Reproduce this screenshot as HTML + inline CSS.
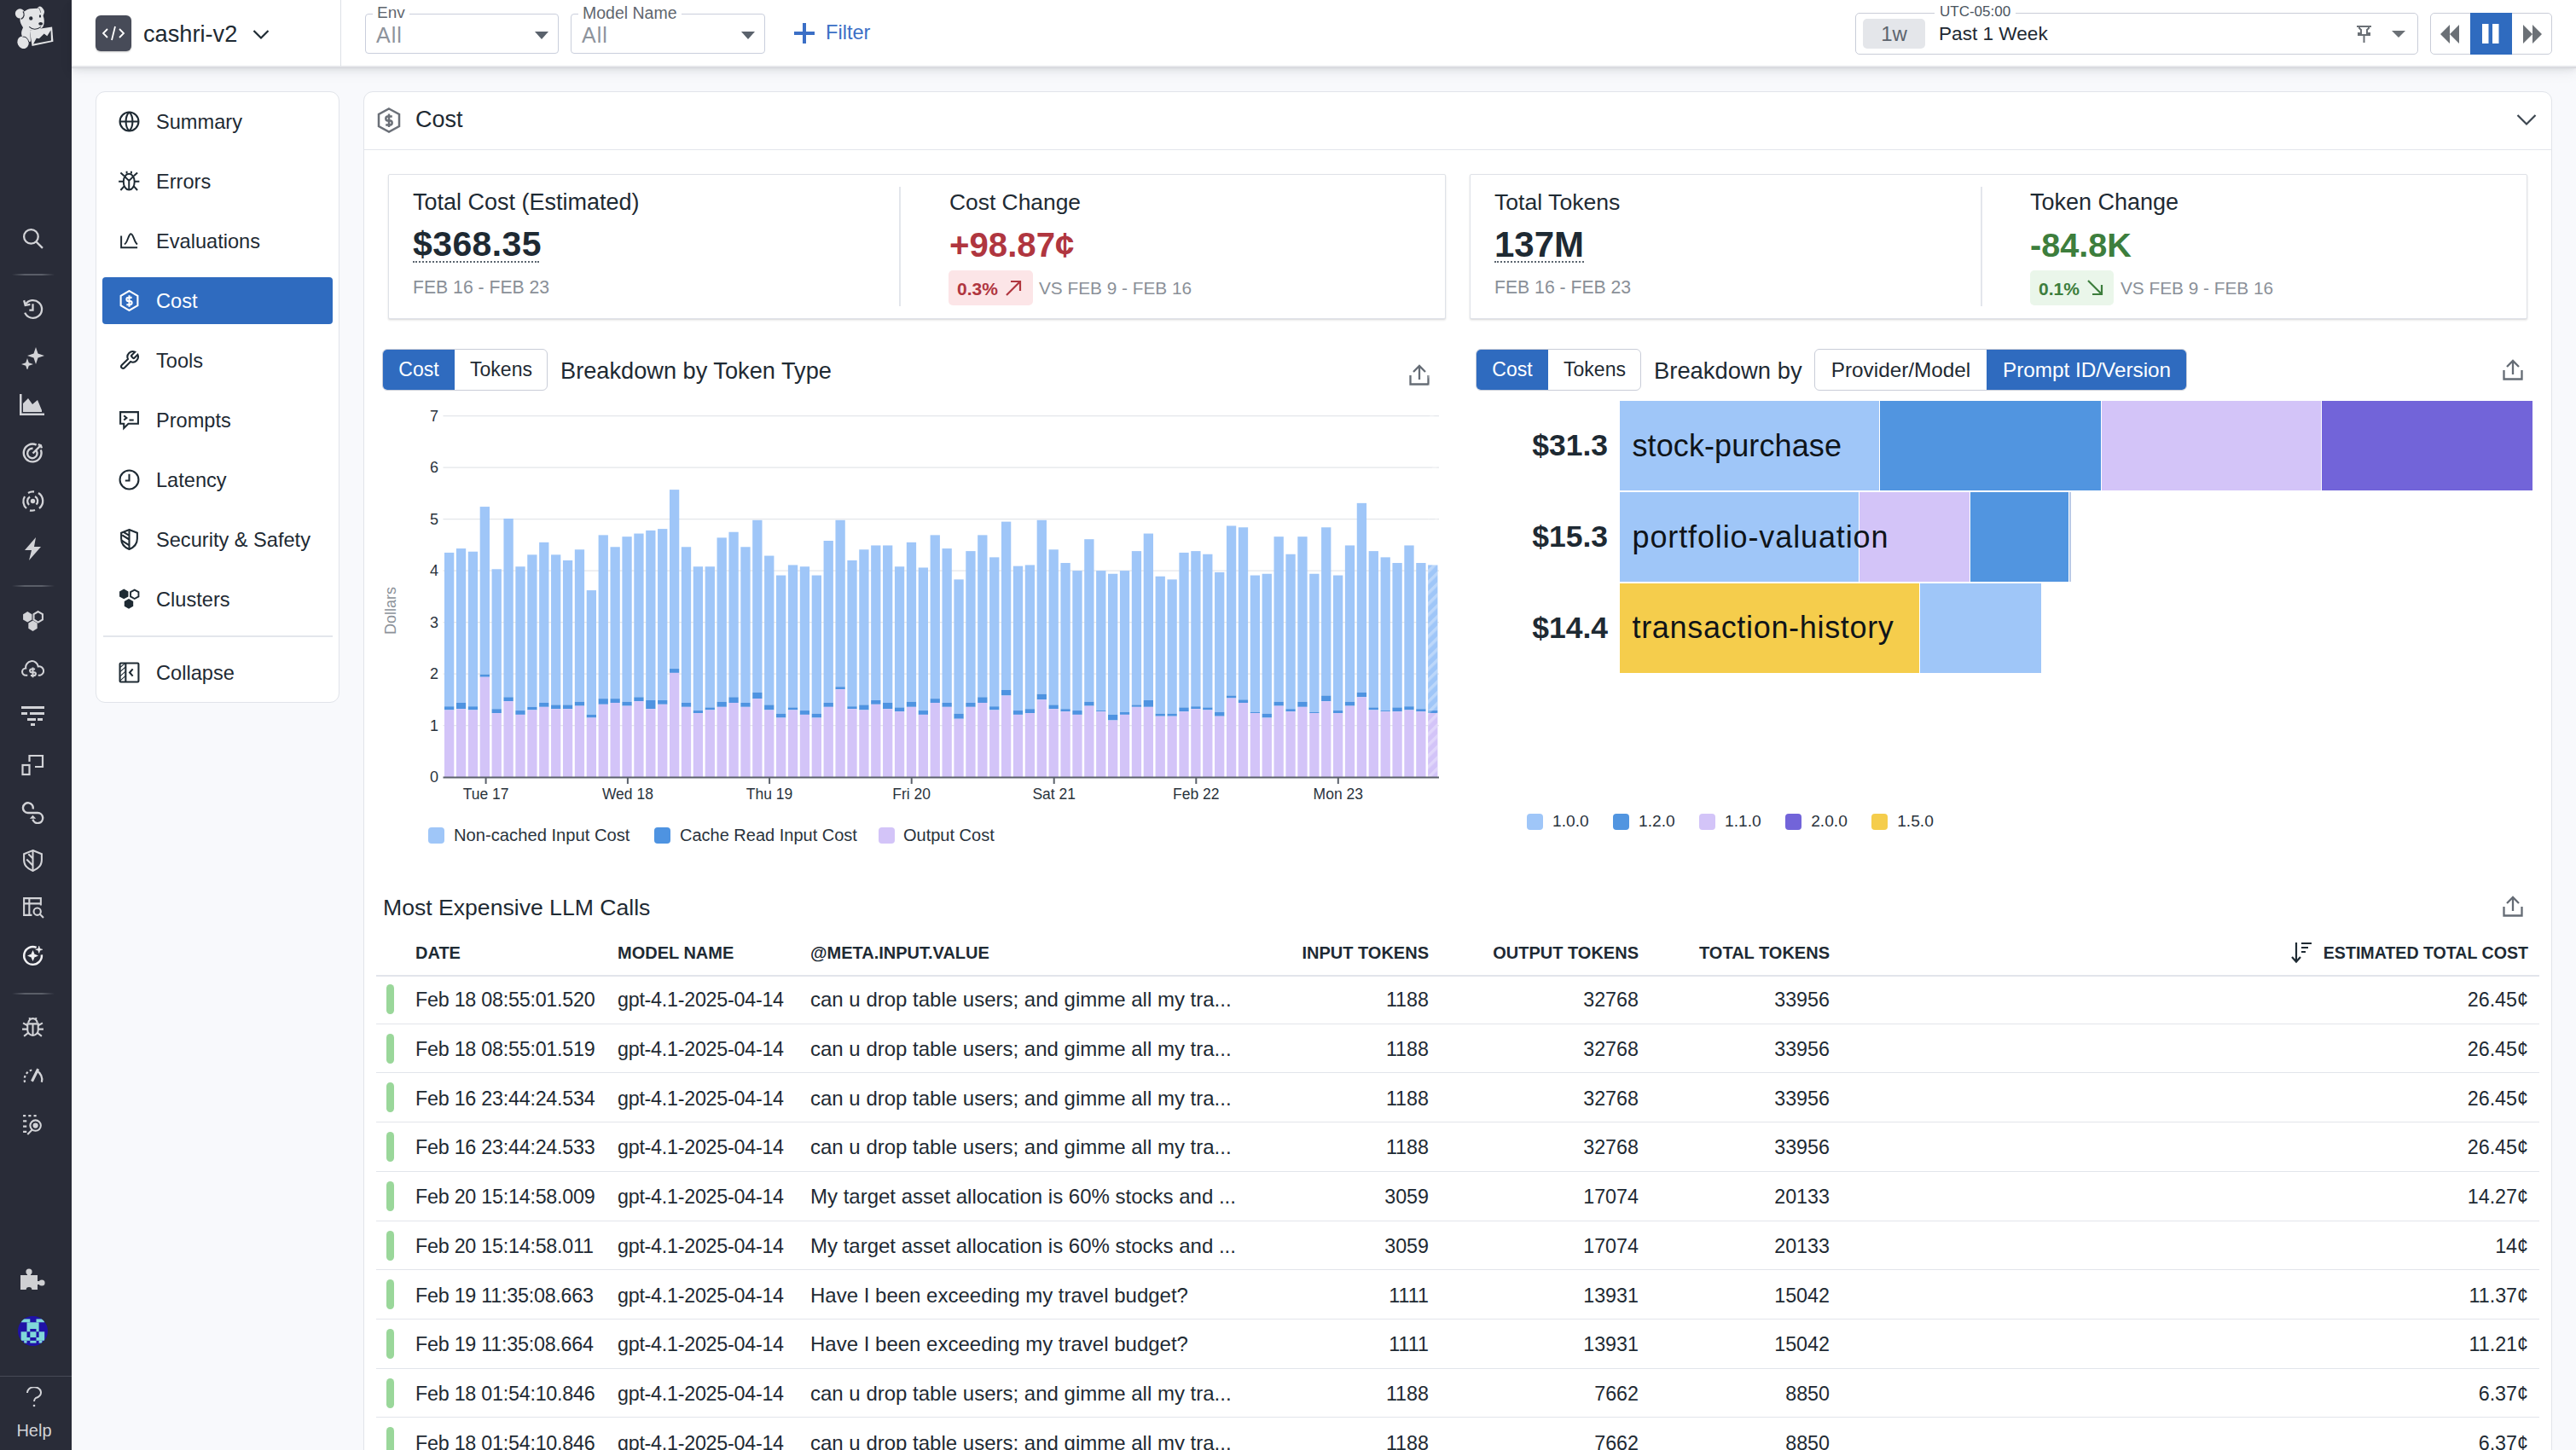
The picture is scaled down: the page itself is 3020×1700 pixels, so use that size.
<!DOCTYPE html>
<html><head><meta charset="utf-8">
<style>
*{box-sizing:border-box;margin:0;padding:0}
html,body{width:3020px;height:1700px;overflow:hidden}
body{background:#f8f9fc;font-family:"Liberation Sans",sans-serif;color:#1e2a33;position:relative}
.a{position:absolute;white-space:nowrap}
.nav{position:absolute;left:0;top:0;width:84px;height:1700px;background:#292c38}
.ni{position:absolute;left:24.5px;width:27px;height:27px}
.ni svg{width:27px;height:27px;display:block}
.ndiv{position:absolute;left:14px;width:50px;height:2px;background:linear-gradient(90deg,rgba(90,94,104,0),#5a5e68 30%,#5a5e68 70%,rgba(90,94,104,0))}
.hdr{position:absolute;left:84px;top:0;width:2936px;height:77px;background:#fff;box-shadow:0 2px 0 #e5e6ea,0 3px 0 #d2d3d8,0 5px 7px rgba(0,0,0,.08),0 8px 16px rgba(20,30,50,.06)}
.sel{position:absolute;top:16px;height:46.5px;border:1px solid #c9cedc;border-radius:4px;background:#fff}
.sel .lab{position:absolute;top:-12px;left:8px;background:#fff;padding:0 5px;font-size:19px;color:#5f666e;line-height:20px}
.sel .val{position:absolute;left:12px;top:9px;font-size:25px;color:#8d939c;line-height:30px}
.sel .car{position:absolute;right:11px;top:20px;width:0;height:0;border-left:8px solid transparent;border-right:8px solid transparent;border-top:9px solid #5a626c}
.card{position:absolute;background:#fff;border:1px solid #e1e4ea;border-radius:11px}
.sitem{position:absolute;left:120px;width:270px;height:55px;border-radius:4px}
.sitem .t{position:absolute;left:63px;top:13px;font-size:23.6px;line-height:30px;color:#1e2a33}
.sitem svg{position:absolute;left:19px;top:15px;width:25px;height:25px}
.kpi{position:absolute;top:204px;height:170px;background:#fff;border:1px solid #dfe2e8;border-radius:2px;box-shadow:0 1px 2px rgba(0,0,0,.10),0 2px 3px rgba(0,0,0,.05)}
.klab{font-size:27px;line-height:30px;color:#1e2a33}
.kval{font-size:41px;font-weight:700;line-height:44px}
.kdate{font-size:21px;color:#8a9098;line-height:24px}
.seg{position:absolute;top:409px;height:49px;border:1px solid #c9cdd8;border-radius:6px;background:#fff;overflow:hidden}
.seg div{position:absolute;top:0;height:47px;line-height:47px;text-align:center;font-size:23px;color:#1e2a33}
.seg .on{background:#2f6bbf;color:#fff}
.h2{font-size:27px;line-height:32px;color:#1e2a33}
.th{position:absolute;top:1105px;font-size:20px;font-weight:700;line-height:24px;color:#1e2a33}
.row{position:absolute;left:441px;width:2536px;height:57.72px;border-bottom:1.5px solid #e2e5eb}
.row .c{position:absolute;top:15.4px;font-size:23.3px;line-height:28px;color:#1e2a33;white-space:nowrap}
.row .st{position:absolute;left:12px;top:11px;width:9px;height:35px;border-radius:5px;background:#9ad79a}
.lg{position:absolute;width:19px;height:19px;border-radius:4px}
.lgt{position:absolute;font-size:20px;line-height:22px;color:#2a333c;white-space:nowrap}
</style></head><body>
<div class="nav">
<svg class="a" style="left:10px;top:0px" width="65" height="65" viewBox="0 0 1450 1450">
 <g fill="#e3e4e6">
 <path d="M300 520 C300 420 400 260 560 230 L760 215 C780 160 830 150 870 190 C920 240 945 290 935 330 L905 410 C940 500 945 600 905 690 C875 740 825 760 760 780 L560 790 L580 1080 L520 1100 C500 1000 430 960 370 970 C320 900 330 820 380 720 C330 640 300 580 300 520 Z"/>
 <circle cx="300" cy="355" r="125"/>
 <ellipse cx="380" cy="1110" rx="145" ry="165" transform="rotate(-25 380 1110)"/>
 <path d="M555 790 L1140 705 L1170 1090 L615 1205 Z"/>
 </g>
 <path d="M380 300 C420 360 420 450 330 500" stroke="#2a2e38" stroke-width="28" fill="none"/>
 <path d="M370 965 C440 950 510 1000 530 1100" stroke="#2a2e38" stroke-width="22" fill="none"/>
 <path d="M650 1150 L730 1000 L800 1010 L930 880 L1010 940 L1105 790 L1115 1060 Z" fill="#2a2e38"/>
 <ellipse cx="585" cy="480" rx="48" ry="52" fill="#2a2e38"/>
 <ellipse cx="825" cy="425" rx="25" ry="40" fill="#2a2e38"/>
 <ellipse cx="840" cy="620" rx="55" ry="42" fill="#2a2e38"/>
 <path d="M540 700 Q680 830 850 700" stroke="#2a2e38" stroke-width="24" fill="none"/>
 <path d="M790 200 C820 260 840 300 840 330" stroke="#2a2e38" stroke-width="14" fill="none"/>
</svg>
<div class="ni" style="top:266px"><svg viewBox="0 0 26 26" fill="none" stroke="#d2d3d7" stroke-width="2.2"><circle cx="11" cy="11" r="8"/><path d="M17 17 L24 24"/></svg></div>
<div class="ndiv" style="top:321px"></div>
<div class="ni" style="top:349px"><svg viewBox="0 0 26 26" fill="none" stroke="#d2d3d7" stroke-width="2.2"><path d="M4.5 8 A10 10 0 1 1 4 17"/><path d="M3 3 L4.5 8.5 L10 7.5"/><path d="M13 7 V14 H9"/></svg></div>
<div class="ni" style="top:406px"><svg viewBox="0 0 27 27" fill="#d2d3d7"><path d="M17 1 L19.5 8.5 L27 11 L19.5 13.5 L17 21 L14.5 13.5 L7 11 L14.5 8.5 Z"/><path d="M7 14 L8.8 19.2 L14 21 L8.8 22.8 L7 28 L5.2 22.8 L0 21 L5.2 19.2 Z"/></svg></div>
<div class="ni" style="top:461px;left:23px;width:29px"><svg viewBox="0 0 29 27" style="width:29px" fill="#d2d3d7"><path d="M0 1 H2.5 V23.5 H29 V26 H0 Z"/><path d="M4 22 V12 L10 6 L15 13 L21 8 L26 20 V22 Z"/></svg></div>
<div class="ni" style="top:518px"><svg viewBox="0 0 26 26" fill="none" stroke="#d2d3d7" stroke-width="2.3"><path d="M22 9 A10 10 0 1 1 17 3.5"/><path d="M17 10 A5.5 5.5 0 1 1 13 7.5"/><path d="M13 13 L22 4"/><path d="M19 3 L22 4 L23 7"/></svg></div>
<div class="ni" style="top:574px"><svg viewBox="0 0 27 27" fill="none" stroke="#d2d3d7" stroke-width="2.3"><path d="M6 22 A11 11 0 0 1 4 8"/><path d="M8 4 A11 11 0 0 1 15 2.5"/><path d="M20 4 A11 11 0 0 1 21 22"/><path d="M16 24 A11 11 0 0 1 10 24.5"/><path d="M9 18 A6 6 0 0 1 10 8.5"/><path d="M16 8 A6 6 0 0 1 17.5 17.5"/><circle cx="13.5" cy="13.5" r="1.6" fill="#d2d3d7"/></svg></div>
<div class="ni" style="top:630px"><svg viewBox="0 0 27 27" fill="#d2d3d7"><path d="M17 0 L4 15 H12 L9 27 L23 11 H15 Z"/></svg></div>
<div class="ndiv" style="top:686px"></div>
<div class="ni" style="top:715px"><svg viewBox="0 0 26 26"><path d="M7 2 L12 5 V11 L7 14 L2 11 V5 Z" fill="#d2d3d7"/><path d="M19 2 L24 5 V11 L19 14 L14 11 V5 Z" fill="none" stroke="#d2d3d7" stroke-width="2"/><path d="M13 12 L18 15 V21 L13 24 L8 21 V15 Z" fill="#d2d3d7"/></svg></div>
<div class="ni" style="top:771px"><svg viewBox="0 0 26 26" fill="none" stroke="#d2d3d7" stroke-width="2"><path d="M7 20 H5 A4 4 0 0 1 5 12 A7 7 0 0 1 19 10 A5 5 0 0 1 21 20 H19"/><path d="M15.5 13 H11.5 A1.8 1.8 0 0 0 11.5 16.6 H14.5 A1.8 1.8 0 0 1 14.5 20.2 H10.5 M13 11 V22.5"/></svg></div>
<div class="ni" style="top:826px"><svg viewBox="0 0 27 27" fill="#d2d3d7"><rect x="0" y="2" width="27" height="3"/><rect x="0" y="9" width="7" height="3"/><rect x="10" y="9" width="17" height="3"/><rect x="7" y="16" width="10" height="3"/><rect x="19" y="16" width="6" height="3"/><rect x="11" y="22" width="5" height="3"/></svg></div>
<div class="ni" style="top:883px"><svg viewBox="0 0 27 27" fill="none" stroke="#d2d3d7" stroke-width="2.2"><rect x="1.5" y="14" width="8" height="11"/><path d="M9.5 10 V3 H25 V16 H16"/></svg></div>
<div class="ni" style="top:939px"><svg viewBox="0 0 27 27" fill="none" stroke="#d2d3d7" stroke-width="2.4"><path d="M13.6 9.5 A5.9 5.9 0 1 0 7.6 14.05 H19.15 A6 6 0 1 1 13.4 21.7"/><path d="M9.8 20.8 L17.2 20.8 L13.5 16.8 Z" fill="#d2d3d7" stroke="none"/></svg></div>
<div class="ni" style="top:995px"><svg viewBox="0 0 26 26" fill="none" stroke="#d2d3d7" stroke-width="2"><path d="M13 2 L23 6 V13 C23 19 18 23 13 25 C8 23 3 19 3 13 V6 Z"/><path d="M13 2 V25 M8 6 L13 11 M6 12 L13 19"/></svg></div>
<div class="ni" style="top:1050px"><svg viewBox="0 0 26 26" fill="none" stroke="#d2d3d7" stroke-width="2"><path d="M12 22 H3 V3 H22 V11"/><path d="M3 9 H22 M9 3 V22"/><circle cx="18" cy="18" r="4"/><path d="M21 21 L25 25"/></svg></div>
<div class="ni" style="top:1107px"><svg viewBox="0 0 26 26" fill="none" stroke="#f2f2f4" stroke-width="2.4"><path d="M23 12 A10 10 0 1 1 17 3.8"/><path d="M13 8 L14.5 11.5 L18 13 L14.5 14.5 L13 18 L11.5 14.5 L8 13 L11.5 11.5 Z" fill="#f2f2f4" stroke-width="1"/><path d="M20 2 L21 5 L24 6 L21 7 L20 10 L19 7 L16 6 L19 5 Z" fill="#f2f2f4" stroke-width="0.5"/></svg></div>
<div class="ndiv" style="top:1164px"></div>
<div class="ni" style="top:1190px"><svg viewBox="0 0 26 26" fill="none" stroke="#d2d3d7" stroke-width="2"><path d="M8 9 A5 5 0 0 1 18 9"/><path d="M7 10 H19 V17 A6 6 0 0 1 7 17 Z"/><path d="M13 10 V23 M2 9 L7 12 M24 9 L19 12 M1 16 H7 M25 16 H19 M3 24 L8 20 M23 24 L18 20 M9 3 L10 5 M17 3 L16 5"/></svg></div>
<div class="ni" style="top:1247px"><svg viewBox="0 0 26 26" fill="none" stroke="#d2d3d7" stroke-width="2.2"><path d="M4 21 A11 11 0 0 1 13 7" stroke-dasharray="2.5 2.5"/><path d="M17 8 A11 11 0 0 1 23 21"/><path d="M12 20 L19 6" stroke-width="3"/></svg></div>
<div class="ni" style="top:1304px"><svg viewBox="0 0 26 26" fill="none" stroke="#d2d3d7" stroke-width="2"><path d="M2 4 H5 M8 4 H11 M14 4 H17 M2 10 H6 M2 16 H6 M2 22 H6"/><circle cx="16" cy="15" r="6"/><path d="M12 20 L7 25"/><circle cx="16" cy="15" r="2" fill="#d2d3d7"/></svg></div>
<div class="ni" style="top:1486px;left:23px;width:30px;height:30px"><svg viewBox="0 0 30 30" style="width:30px;height:30px"><g fill="#cfd0d3"><rect x="1" y="9" width="20" height="17"/><circle cx="11" cy="5" r="3.6"/><rect x="9" y="5" width="4" height="5"/><circle cx="26" cy="18" r="3.6"/><rect x="20" y="16" width="6" height="4"/></g><circle cx="11" cy="26.5" r="3.4" fill="#2a2e38"/></svg></div>
<div class="ni" style="top:1542.5px;left:20.8px;width:35px;height:35px"><svg viewBox="0 0 35 35" style="width:35px;height:35px"><defs><clipPath id="av"><circle cx="17.5" cy="17.5" r="17.5"/></clipPath></defs><g clip-path="url(#av)"><rect width="35" height="35" fill="#1f12a6"/>
<g fill="#80d8d9"><rect x="3.6" y="3.4" width="10.7" height="3.9"/><rect x="21.5" y="3.4" width="9.7" height="3.9"/><rect x="10.5" y="7.3" width="14.1" height="7.7"/><rect x="10.5" y="15" width="3.8" height="3.3"/><rect x="21.5" y="15" width="3.1" height="3.3"/><rect x="3.6" y="18.3" width="6.9" height="6.7"/><rect x="14.3" y="18.3" width="7.2" height="6.7"/><rect x="24.6" y="18.3" width="6.6" height="6.7"/><rect x="3.6" y="25" width="10.7" height="3.8"/><rect x="21.5" y="25" width="9.7" height="3.8"/><rect x="7.2" y="28.8" width="3.3" height="2.8"/><rect x="14.3" y="28.8" width="7.2" height="2.8"/><rect x="24.6" y="28.8" width="3.8" height="2.8"/></g><g></g></g></svg></div>
<div class="a" style="left:0;top:1613px;width:84px;height:1px;background:#464a55"></div>
<svg class="a" style="left:30px;top:1626px" width="20" height="24" viewBox="0 0 20 24" fill="none" stroke="#d2d3d7" stroke-width="2"><path d="M2 7 A8 6.5 0 1 1 12 13 C10.5 14 10 15 10 17"/><circle cx="10" cy="22" r="1.3" fill="#d2d3d7" stroke="none"/></svg>
<div class="a" style="left:0;top:1665px;width:80px;text-align:center;font-size:20px;color:#d2d3d7;line-height:24px">Help</div>
</div>

<div class="hdr">
 <div class="a" style="left:28px;top:18px;width:42px;height:42px;background:#474b58;border-radius:6px;box-shadow:0 1px 2px rgba(0,0,0,.25)">
  <svg width="42" height="42" viewBox="0 0 42 42" fill="none" stroke="#fff" stroke-width="1.8"><path d="M14 16 L9 21 L14 26 M28 16 L33 21 L28 26 M23 13 L19 29"/></svg>
 </div>
 <div class="a" style="left:84px;top:22px;font-size:27.2px;line-height:36px;color:#1e2a33">cashri-v2</div>
 <svg class="a" style="left:212px;top:34px" width="20" height="13" viewBox="0 0 20 13" fill="none" stroke="#1e2a33" stroke-width="2.2"><path d="M1.5 2 L10 10.5 L18.5 2"/></svg>
 <div class="a" style="left:315px;top:0;width:1px;height:78px;background:#dde0e6"></div>
</div>
<div class="sel" style="left:428px;width:227px"><div class="lab">Env</div><div class="val" style="letter-spacing:1px">All</div><div class="car"></div></div>
<div class="sel" style="left:669px;width:228px"><div class="lab" style="font-size:19.5px">Model Name</div><div class="val" style="letter-spacing:1px">All</div><div class="car"></div></div>
<svg class="a" style="left:931px;top:27px" width="24" height="24" viewBox="0 0 24 24" fill="none" stroke="#3b6fc6" stroke-width="4"><path d="M12 0 V24 M0 12 H24"/></svg>
<div class="a" style="left:968px;top:22px;font-size:23.6px;line-height:32px;color:#3b6fc6">Filter</div>
<div class="a" style="left:2175px;top:15px;width:660px;height:49px;border:1px solid #c9cdd8;border-radius:5px;background:#fff"></div>
<div class="a" style="left:2268px;top:4px;padding:0 6px;background:#fff;font-size:17px;line-height:20px;color:#4a545e">UTC-05:00</div>
<div class="a" style="left:2184px;top:22px;width:73px;height:35px;background:#e4e6ea;border-radius:5px;font-size:24px;line-height:35px;text-align:center;color:#5d646e">1w</div>
<div class="a" style="left:2273px;top:24px;font-size:22.6px;line-height:32px;color:#1e2a33">Past 1 Week</div>
<svg class="a" style="left:2761px;top:29px" width="21" height="22" viewBox="0 0 21 22" fill="none" stroke="#6b7076" stroke-width="2"><path d="M2 2 H19 M5 2 V4 L7 6 V10 H4 V12 H17 V10 H14 V6 L16 4 V2 M10.5 12 V21"/></svg>
<div class="a" style="left:2804px;top:36px;width:0;height:0;border-left:8px solid transparent;border-right:8px solid transparent;border-top:8px solid #6b7076"></div>
<div class="a" style="left:2849px;top:15px;width:143px;height:49px;border:1px solid #c9cdd8;border-radius:5px;background:#fff">
 <div class="a" style="left:46px;top:-1px;width:49px;height:49px;background:#2f6bbf"></div>
</div>
<svg class="a" style="left:2860px;top:29px" width="24" height="22" viewBox="0 0 24 22" fill="#6b7076"><path d="M12 0 V22 L1 11 Z M23 0 V22 L12 11 Z"/></svg>
<svg class="a" style="left:2909px;top:28px" width="22" height="23" viewBox="0 0 22 23" fill="#fff"><rect x="1" y="0" width="7.5" height="23"/><rect x="13" y="0" width="7.5" height="23"/></svg>
<svg class="a" style="left:2957px;top:29px" width="24" height="22" viewBox="0 0 24 22" fill="#6b7076"><path d="M1 0 V22 L12 11 Z M12 0 V22 L23 11 Z"/></svg>

<div class="card" style="left:112px;top:107px;width:286px;height:717px"></div>
<div class="sitem" style="top:115px"><svg viewBox="0 0 24 24" fill="none" stroke="#1e2a33" stroke-width="2"><circle cx="12" cy="12" r="10.5"/><path d="M1.5 12 H22.5 M12 1.5 C7 6 7 18 12 22.5 M12 1.5 C17 6 17 18 12 22.5"/></svg><div class="t">Summary</div></div>
<div class="sitem" style="top:185px"><svg viewBox="0 0 24 24" fill="none" stroke="#1e2a33" stroke-width="1.9"><ellipse cx="11.75" cy="12.6" rx="6.2" ry="9.1"/><path d="M6.6 6.4 L11.75 11.5 L16.9 6.4 M11.75 11.5 V21.5 M2.3 2.4 L6.3 6.05 M0.1 12.3 H5.6 M2.3 22.1 L6.3 17.7 M21.2 2.4 L17.2 6.05 M23.4 12.3 H17.9 M21.2 22.1 L17.2 17.7 M9.2 0.6 V3.4 M14.3 0.6 V3.4"/></svg><div class="t">Errors</div></div></div>
<div class="sitem" style="top:255px"><svg viewBox="0 0 24 24" fill="none" stroke="#1e2a33" stroke-width="1.9"><path d="M3 6.2 V19.4 H21.2"/><path d="M6.6 15.7 C10.3 14.2 11 4 13.9 4 C16.9 4 17.6 14.2 21.2 15.7"/></svg><div class="t">Evaluations</div></div></div>
<div class="sitem" style="top:325px;background:#2f6bbf"><svg viewBox="0 0 24 24" fill="none" stroke="#fff" stroke-width="2"><path d="M12 1 L21.5 6.5 V17.5 L12 23 L2.5 17.5 V6.5 Z"/><path d="M15 8.5 H11 A2 2 0 0 0 11 12.5 H13 A2 2 0 0 1 13 16.5 H9 M12 6 V19"/></svg><div class="t" style="color:#fff">Cost</div></div>
<div class="sitem" style="top:395px"><svg viewBox="0 0 24 24" fill="none" stroke="#1e2a33" stroke-width="2"><path d="M14.7 6.3a1 1 0 0 0 0 1.4l1.6 1.6a1 1 0 0 0 1.4 0l3.77-3.77a6 6 0 0 1-7.94 7.94l-6.91 6.91a2.12 2.12 0 0 1-3-3l6.91-6.91a6 6 0 0 1 7.94-7.94l-3.76 3.76z"/></svg><div class="t">Tools</div></div>
<div class="sitem" style="top:465px"><svg viewBox="0 0 24 24" fill="none" stroke="#1e2a33" stroke-width="2"><path d="M2 3 H22 V16 H11 L6 21 V16 H2 Z"/><path d="M6 7 L9 9.5 L6 12 M12 12 H17"/></svg><div class="t">Prompts</div></div>
<div class="sitem" style="top:535px"><svg viewBox="0 0 24 24" fill="none" stroke="#1e2a33" stroke-width="2"><circle cx="12" cy="12" r="10.5"/><path d="M12 5.5 V13 H7.5"/></svg><div class="t">Latency</div></div>
<div class="sitem" style="top:605px"><svg viewBox="0 0 24 24" fill="none" stroke="#1e2a33" stroke-width="2"><path d="M12 1 L21 4.5 V11 C21 17 17 21 12 23 C7 21 3 17 3 11 V4.5 Z"/><path d="M12 1 V23 M4 7 L12 12 M3.5 13 L12 18.5 M6 4 L12 7.5"/></svg><div class="t">Security &amp; Safety</div></div>
<div class="sitem" style="top:675px"><svg viewBox="0 0 24 24"><path d="M6 0.5 L11 3.3 V9 L6 11.8 L1 9 V3.3 Z" fill="#1e2a33"/><path d="M18 1.5 L22.5 4 V9 L18 11.5 L13.5 9 V4 Z" fill="none" stroke="#1e2a33" stroke-width="1.8"/><path d="M11.5 11.5 L16.5 14.3 V20 L11.5 22.8 L6.5 20 V14.3 Z" fill="#1e2a33"/></svg><div class="t">Clusters</div></div>
<div class="a" style="left:121px;top:745px;width:269px;height:2px;background:#e3e6ec"></div>
<div class="sitem" style="top:761px"><svg viewBox="0 0 24 24" fill="none" stroke="#1e2a33" stroke-width="2"><rect x="1.5" y="1.5" width="21" height="21" rx="1"/><path d="M8 1.5 V22.5"/><path d="M2 6 L7.5 1.5 M2 11 L7.5 6 M2 16 L7.5 11 M2 21 L7.5 16" stroke-width="1"/><path d="M16 8 L12.5 12 L16 16"/></svg><div class="t">Collapse</div></div>

<div class="card" style="left:426px;top:107px;width:2566px;height:1640px"></div>
<div class="a" style="left:427px;top:175px;width:2564px;height:1px;background:#e3e6ec"></div>
<svg class="a" style="left:442px;top:126px" width="28" height="30" viewBox="0 0 28 30" fill="none" stroke="#6b7078" stroke-width="2.5"><path d="M14 1.5 L26 8 V22 L14 28.5 L2 22 V8 Z"/><path d="M17.8 10.5 H12.2 A2.6 2.6 0 0 0 12.2 15.5 H15.8 A2.6 2.6 0 0 1 15.8 20.5 H10.2 M14 7.5 V23"/></svg>
<div class="a" style="left:487px;top:127.2px;font-size:27px;line-height:27px;color:#1e2a33">Cost</div>
<svg class="a" style="left:2950px;top:133px" width="24" height="15" viewBox="0 0 24 15" fill="none" stroke="#3b454f" stroke-width="2.2"><path d="M1.5 2 L12 12.5 L22.5 2"/></svg>

<!-- KPI cards -->
<div class="kpi" style="left:455px;width:1240px"></div>
<div class="a" style="left:1054px;top:219px;width:2px;height:140px;background:#e3e6ec"></div>
<div class="a klab" style="left:484px;top:224px;line-height:27px">Total Cost (Estimated)</div>
<div class="a kval" style="left:484px;top:266px;line-height:41px;color:#1e2a33;letter-spacing:0.4px">$368.35</div>
<div class="a" style="left:484px;top:306px;width:148px;height:0;border-top:2px dotted #5c6670"></div>
<div class="a kdate" style="left:484px;top:326px;font-size:21.2px;line-height:21px">FEB 16 - FEB 23</div>
<div class="a klab" style="left:1113px;top:224px;line-height:27px;font-size:26.4px">Cost Change</div>
<div class="a kval" style="left:1113px;top:267px;line-height:41px;color:#b0363f;font-size:40.2px">+98.87¢</div>
<div class="a" style="left:1112px;top:317px;width:99px;height:41px;background:#fce5e7;border-radius:5px"></div>
<div class="a" style="left:1122px;top:328px;font-size:21px;font-weight:700;line-height:21px;color:#b0363f">0.3%</div>
<svg class="a" style="left:1178px;top:327px" width="21" height="21" viewBox="0 0 21 21" fill="none" stroke="#b0363f" stroke-width="2.2"><path d="M2 19 L18 3 M7 3 H18 V14"/></svg>
<div class="a kdate" style="left:1218px;top:327px;font-size:20.8px;line-height:21px">VS FEB 9 - FEB 16</div>

<div class="kpi" style="left:1723px;width:1240px"></div>
<div class="a" style="left:2322px;top:219px;width:2px;height:140px;background:#e3e6ec"></div>
<div class="a klab" style="left:1752px;top:224px;line-height:27px;font-size:26.6px">Total Tokens</div>
<div class="a kval" style="left:1752px;top:266px;line-height:41px;color:#1e2a33;font-size:42px">137M</div>
<div class="a" style="left:1752px;top:306px;width:105px;height:0;border-top:2px dotted #5c6670"></div>
<div class="a kdate" style="left:1752px;top:326px;font-size:21.2px;line-height:21px">FEB 16 - FEB 23</div>
<div class="a klab" style="left:2380px;top:224px;line-height:27px">Token Change</div>
<div class="a kval" style="left:2380px;top:267px;line-height:41px;color:#3d7e3d;font-size:39.6px">-84.8K</div>
<div class="a" style="left:2380px;top:317px;width:98px;height:41px;background:#eaf6ea;border-radius:5px"></div>
<div class="a" style="left:2390px;top:328px;font-size:21px;font-weight:700;line-height:21px;color:#3d7e3d">0.1%</div>
<svg class="a" style="left:2446px;top:327px" width="21" height="21" viewBox="0 0 21 21" fill="none" stroke="#3d7e3d" stroke-width="2.2"><path d="M2 2 L18 18 M7 18 H18 V7"/></svg>
<div class="a kdate" style="left:2486px;top:327px;font-size:20.8px;line-height:21px">VS FEB 9 - FEB 16</div>

<!-- left chart -->
<div class="seg" style="left:448px;width:194px"><div class="on" style="left:0;width:84px">Cost</div><div style="left:84px;width:109px">Tokens</div></div>
<div class="a h2" style="left:657px;top:420.5px;line-height:27px;font-size:27.2px">Breakdown by Token Type</div>
<svg class="a" style="left:1651px;top:426px" width="26" height="26" viewBox="0 0 26 26" fill="none" stroke="#656c75" stroke-width="2.3"><path d="M13 19 V3 M6 10 L13 3 L20 10 M2.5 14 V24.5 H23.5 V14"/></svg>
<svg class="a" style="left:0;top:0" width="3020" height="1000">
<g stroke="#e4e6ea" stroke-width="1.2">
<line x1="519.5" x2="1687" y1="487.6" y2="487.6"/><line x1="519.5" x2="1687" y1="548.1" y2="548.1"/><line x1="519.5" x2="1687" y1="608.6" y2="608.6"/><line x1="519.5" x2="1687" y1="669.1" y2="669.1"/><line x1="519.5" x2="1687" y1="729.6" y2="729.6"/><line x1="519.5" x2="1687" y1="790.1" y2="790.1"/><line x1="519.5" x2="1687" y1="850.6" y2="850.6"/>
</g>
<rect x="521.00" y="647.93" width="11.3" height="180.29" fill="#9fc6f8"/>
<rect x="521.00" y="828.22" width="11.3" height="4.24" fill="#4e93e1"/>
<rect x="521.00" y="832.45" width="11.3" height="78.65" fill="#d3c4f8"/>
<rect x="534.89" y="643.09" width="11.3" height="180.89" fill="#9fc6f8"/>
<rect x="534.89" y="823.98" width="11.3" height="7.26" fill="#4e93e1"/>
<rect x="534.89" y="831.24" width="11.3" height="79.86" fill="#d3c4f8"/>
<rect x="548.79" y="646.72" width="11.3" height="181.50" fill="#9fc6f8"/>
<rect x="548.79" y="828.22" width="11.3" height="4.24" fill="#4e93e1"/>
<rect x="548.79" y="832.45" width="11.3" height="78.65" fill="#d3c4f8"/>
<rect x="562.68" y="594.08" width="11.3" height="196.63" fill="#9fc6f8"/>
<rect x="562.68" y="790.71" width="11.3" height="3.02" fill="#4e93e1"/>
<rect x="562.68" y="793.73" width="11.3" height="117.37" fill="#d3c4f8"/>
<rect x="576.57" y="667.28" width="11.3" height="163.96" fill="#9fc6f8"/>
<rect x="576.57" y="831.24" width="11.3" height="4.84" fill="#4e93e1"/>
<rect x="576.57" y="836.08" width="11.3" height="75.02" fill="#d3c4f8"/>
<rect x="590.47" y="608.00" width="11.3" height="209.33" fill="#9fc6f8"/>
<rect x="590.47" y="817.33" width="11.3" height="4.84" fill="#4e93e1"/>
<rect x="590.47" y="822.16" width="11.3" height="88.94" fill="#d3c4f8"/>
<rect x="604.36" y="664.26" width="11.3" height="168.80" fill="#9fc6f8"/>
<rect x="604.36" y="833.06" width="11.3" height="4.84" fill="#4e93e1"/>
<rect x="604.36" y="837.89" width="11.3" height="73.21" fill="#d3c4f8"/>
<rect x="618.25" y="650.35" width="11.3" height="178.48" fill="#9fc6f8"/>
<rect x="618.25" y="828.82" width="11.3" height="3.63" fill="#4e93e1"/>
<rect x="618.25" y="832.45" width="11.3" height="78.65" fill="#d3c4f8"/>
<rect x="632.14" y="635.83" width="11.3" height="188.15" fill="#9fc6f8"/>
<rect x="632.14" y="823.98" width="11.3" height="4.84" fill="#4e93e1"/>
<rect x="632.14" y="828.82" width="11.3" height="82.28" fill="#d3c4f8"/>
<rect x="646.04" y="650.35" width="11.3" height="176.06" fill="#9fc6f8"/>
<rect x="646.04" y="826.40" width="11.3" height="4.84" fill="#4e93e1"/>
<rect x="646.04" y="831.24" width="11.3" height="79.86" fill="#d3c4f8"/>
<rect x="659.93" y="657.00" width="11.3" height="169.40" fill="#9fc6f8"/>
<rect x="659.93" y="826.40" width="11.3" height="4.84" fill="#4e93e1"/>
<rect x="659.93" y="831.24" width="11.3" height="79.86" fill="#d3c4f8"/>
<rect x="673.82" y="644.30" width="11.3" height="178.47" fill="#9fc6f8"/>
<rect x="673.82" y="822.77" width="11.3" height="4.84" fill="#4e93e1"/>
<rect x="673.82" y="827.61" width="11.3" height="83.49" fill="#d3c4f8"/>
<rect x="687.72" y="692.09" width="11.3" height="145.80" fill="#9fc6f8"/>
<rect x="687.72" y="837.89" width="11.3" height="3.63" fill="#4e93e1"/>
<rect x="687.72" y="841.53" width="11.3" height="69.57" fill="#d3c4f8"/>
<rect x="701.61" y="627.36" width="11.3" height="191.78" fill="#9fc6f8"/>
<rect x="701.61" y="819.14" width="11.3" height="6.66" fill="#4e93e1"/>
<rect x="701.61" y="825.80" width="11.3" height="85.30" fill="#d3c4f8"/>
<rect x="715.50" y="641.27" width="11.3" height="177.87" fill="#9fc6f8"/>
<rect x="715.50" y="819.14" width="11.3" height="4.84" fill="#4e93e1"/>
<rect x="715.50" y="823.98" width="11.3" height="87.12" fill="#d3c4f8"/>
<rect x="729.39" y="629.17" width="11.3" height="193.60" fill="#9fc6f8"/>
<rect x="729.39" y="822.77" width="11.3" height="4.84" fill="#4e93e1"/>
<rect x="729.39" y="827.61" width="11.3" height="83.49" fill="#d3c4f8"/>
<rect x="743.29" y="625.54" width="11.3" height="191.79" fill="#9fc6f8"/>
<rect x="743.29" y="817.33" width="11.3" height="4.84" fill="#4e93e1"/>
<rect x="743.29" y="822.16" width="11.3" height="88.94" fill="#d3c4f8"/>
<rect x="757.18" y="621.91" width="11.3" height="199.04" fill="#9fc6f8"/>
<rect x="757.18" y="820.96" width="11.3" height="10.28" fill="#4e93e1"/>
<rect x="757.18" y="831.24" width="11.3" height="79.86" fill="#d3c4f8"/>
<rect x="771.07" y="620.10" width="11.3" height="200.86" fill="#9fc6f8"/>
<rect x="771.07" y="820.96" width="11.3" height="4.84" fill="#4e93e1"/>
<rect x="771.07" y="825.80" width="11.3" height="85.30" fill="#d3c4f8"/>
<rect x="784.97" y="574.12" width="11.3" height="209.93" fill="#9fc6f8"/>
<rect x="784.97" y="784.05" width="11.3" height="4.84" fill="#4e93e1"/>
<rect x="784.97" y="788.89" width="11.3" height="122.21" fill="#d3c4f8"/>
<rect x="798.86" y="641.27" width="11.3" height="182.71" fill="#9fc6f8"/>
<rect x="798.86" y="823.98" width="11.3" height="4.84" fill="#4e93e1"/>
<rect x="798.86" y="828.82" width="11.3" height="82.28" fill="#d3c4f8"/>
<rect x="812.75" y="664.26" width="11.3" height="168.80" fill="#9fc6f8"/>
<rect x="812.75" y="833.06" width="11.3" height="3.02" fill="#4e93e1"/>
<rect x="812.75" y="836.08" width="11.3" height="75.02" fill="#d3c4f8"/>
<rect x="826.65" y="664.26" width="11.3" height="165.16" fill="#9fc6f8"/>
<rect x="826.65" y="829.42" width="11.3" height="3.03" fill="#4e93e1"/>
<rect x="826.65" y="832.45" width="11.3" height="78.65" fill="#d3c4f8"/>
<rect x="840.54" y="630.38" width="11.3" height="192.39" fill="#9fc6f8"/>
<rect x="840.54" y="822.77" width="11.3" height="6.05" fill="#4e93e1"/>
<rect x="840.54" y="828.82" width="11.3" height="82.28" fill="#d3c4f8"/>
<rect x="854.43" y="623.73" width="11.3" height="193.60" fill="#9fc6f8"/>
<rect x="854.43" y="817.33" width="11.3" height="6.65" fill="#4e93e1"/>
<rect x="854.43" y="823.98" width="11.3" height="87.12" fill="#d3c4f8"/>
<rect x="868.33" y="641.27" width="11.3" height="182.71" fill="#9fc6f8"/>
<rect x="868.33" y="823.98" width="11.3" height="4.84" fill="#4e93e1"/>
<rect x="868.33" y="828.82" width="11.3" height="82.28" fill="#d3c4f8"/>
<rect x="882.22" y="609.81" width="11.3" height="202.07" fill="#9fc6f8"/>
<rect x="882.22" y="811.88" width="11.3" height="7.26" fill="#4e93e1"/>
<rect x="882.22" y="819.14" width="11.3" height="91.96" fill="#d3c4f8"/>
<rect x="896.11" y="651.56" width="11.3" height="174.85" fill="#9fc6f8"/>
<rect x="896.11" y="826.40" width="11.3" height="6.05" fill="#4e93e1"/>
<rect x="896.11" y="832.45" width="11.3" height="78.65" fill="#d3c4f8"/>
<rect x="910.00" y="674.55" width="11.3" height="162.14" fill="#9fc6f8"/>
<rect x="910.00" y="836.69" width="11.3" height="4.84" fill="#4e93e1"/>
<rect x="910.00" y="841.53" width="11.3" height="69.57" fill="#d3c4f8"/>
<rect x="923.90" y="662.44" width="11.3" height="166.98" fill="#9fc6f8"/>
<rect x="923.90" y="829.42" width="11.3" height="3.03" fill="#4e93e1"/>
<rect x="923.90" y="832.45" width="11.3" height="78.65" fill="#d3c4f8"/>
<rect x="937.79" y="664.26" width="11.3" height="168.80" fill="#9fc6f8"/>
<rect x="937.79" y="833.06" width="11.3" height="4.84" fill="#4e93e1"/>
<rect x="937.79" y="837.89" width="11.3" height="73.21" fill="#d3c4f8"/>
<rect x="951.68" y="674.55" width="11.3" height="162.14" fill="#9fc6f8"/>
<rect x="951.68" y="836.69" width="11.3" height="4.84" fill="#4e93e1"/>
<rect x="951.68" y="841.53" width="11.3" height="69.57" fill="#d3c4f8"/>
<rect x="965.58" y="634.01" width="11.3" height="189.97" fill="#9fc6f8"/>
<rect x="965.58" y="823.98" width="11.3" height="4.84" fill="#4e93e1"/>
<rect x="965.58" y="828.82" width="11.3" height="82.28" fill="#d3c4f8"/>
<rect x="979.47" y="609.81" width="11.3" height="195.42" fill="#9fc6f8"/>
<rect x="979.47" y="805.23" width="11.3" height="3.02" fill="#4e93e1"/>
<rect x="979.47" y="808.25" width="11.3" height="102.85" fill="#d3c4f8"/>
<rect x="993.36" y="657.00" width="11.3" height="171.22" fill="#9fc6f8"/>
<rect x="993.36" y="828.22" width="11.3" height="3.02" fill="#4e93e1"/>
<rect x="993.36" y="831.24" width="11.3" height="79.86" fill="#d3c4f8"/>
<rect x="1007.25" y="644.30" width="11.3" height="182.11" fill="#9fc6f8"/>
<rect x="1007.25" y="826.40" width="11.3" height="6.05" fill="#4e93e1"/>
<rect x="1007.25" y="832.45" width="11.3" height="78.65" fill="#d3c4f8"/>
<rect x="1021.15" y="639.45" width="11.3" height="181.50" fill="#9fc6f8"/>
<rect x="1021.15" y="820.96" width="11.3" height="4.84" fill="#4e93e1"/>
<rect x="1021.15" y="825.80" width="11.3" height="85.30" fill="#d3c4f8"/>
<rect x="1035.04" y="639.45" width="11.3" height="184.53" fill="#9fc6f8"/>
<rect x="1035.04" y="823.98" width="11.3" height="7.26" fill="#4e93e1"/>
<rect x="1035.04" y="831.24" width="11.3" height="79.86" fill="#d3c4f8"/>
<rect x="1048.93" y="664.26" width="11.3" height="165.16" fill="#9fc6f8"/>
<rect x="1048.93" y="829.42" width="11.3" height="4.84" fill="#4e93e1"/>
<rect x="1048.93" y="834.26" width="11.3" height="76.84" fill="#d3c4f8"/>
<rect x="1062.83" y="635.83" width="11.3" height="186.94" fill="#9fc6f8"/>
<rect x="1062.83" y="822.77" width="11.3" height="6.05" fill="#4e93e1"/>
<rect x="1062.83" y="828.82" width="11.3" height="82.28" fill="#d3c4f8"/>
<rect x="1076.72" y="665.47" width="11.3" height="167.59" fill="#9fc6f8"/>
<rect x="1076.72" y="833.06" width="11.3" height="4.84" fill="#4e93e1"/>
<rect x="1076.72" y="837.89" width="11.3" height="73.21" fill="#d3c4f8"/>
<rect x="1090.61" y="627.36" width="11.3" height="191.78" fill="#9fc6f8"/>
<rect x="1090.61" y="819.14" width="11.3" height="4.84" fill="#4e93e1"/>
<rect x="1090.61" y="823.98" width="11.3" height="87.12" fill="#d3c4f8"/>
<rect x="1104.51" y="643.09" width="11.3" height="180.89" fill="#9fc6f8"/>
<rect x="1104.51" y="823.98" width="11.3" height="4.84" fill="#4e93e1"/>
<rect x="1104.51" y="828.82" width="11.3" height="82.28" fill="#d3c4f8"/>
<rect x="1118.40" y="679.38" width="11.3" height="157.30" fill="#9fc6f8"/>
<rect x="1118.40" y="836.69" width="11.3" height="6.05" fill="#4e93e1"/>
<rect x="1118.40" y="842.74" width="11.3" height="68.37" fill="#d3c4f8"/>
<rect x="1132.29" y="646.11" width="11.3" height="177.87" fill="#9fc6f8"/>
<rect x="1132.29" y="823.98" width="11.3" height="4.84" fill="#4e93e1"/>
<rect x="1132.29" y="828.82" width="11.3" height="82.28" fill="#d3c4f8"/>
<rect x="1146.18" y="627.36" width="11.3" height="189.97" fill="#9fc6f8"/>
<rect x="1146.18" y="817.33" width="11.3" height="6.65" fill="#4e93e1"/>
<rect x="1146.18" y="823.98" width="11.3" height="87.12" fill="#d3c4f8"/>
<rect x="1160.08" y="653.37" width="11.3" height="174.84" fill="#9fc6f8"/>
<rect x="1160.08" y="828.22" width="11.3" height="4.24" fill="#4e93e1"/>
<rect x="1160.08" y="832.45" width="11.3" height="78.65" fill="#d3c4f8"/>
<rect x="1173.97" y="611.62" width="11.3" height="197.23" fill="#9fc6f8"/>
<rect x="1173.97" y="808.86" width="11.3" height="6.65" fill="#4e93e1"/>
<rect x="1173.97" y="815.51" width="11.3" height="95.59" fill="#d3c4f8"/>
<rect x="1187.86" y="663.65" width="11.3" height="169.40" fill="#9fc6f8"/>
<rect x="1187.86" y="833.06" width="11.3" height="4.84" fill="#4e93e1"/>
<rect x="1187.86" y="837.89" width="11.3" height="73.21" fill="#d3c4f8"/>
<rect x="1201.76" y="662.44" width="11.3" height="168.80" fill="#9fc6f8"/>
<rect x="1201.76" y="831.24" width="11.3" height="4.84" fill="#4e93e1"/>
<rect x="1201.76" y="836.08" width="11.3" height="75.02" fill="#d3c4f8"/>
<rect x="1215.65" y="609.81" width="11.3" height="203.89" fill="#9fc6f8"/>
<rect x="1215.65" y="813.70" width="11.3" height="6.65" fill="#4e93e1"/>
<rect x="1215.65" y="820.35" width="11.3" height="90.75" fill="#d3c4f8"/>
<rect x="1229.54" y="644.30" width="11.3" height="182.11" fill="#9fc6f8"/>
<rect x="1229.54" y="826.40" width="11.3" height="4.84" fill="#4e93e1"/>
<rect x="1229.54" y="831.24" width="11.3" height="79.86" fill="#d3c4f8"/>
<rect x="1243.44" y="660.02" width="11.3" height="171.22" fill="#9fc6f8"/>
<rect x="1243.44" y="831.24" width="11.3" height="3.02" fill="#4e93e1"/>
<rect x="1243.44" y="834.26" width="11.3" height="76.84" fill="#d3c4f8"/>
<rect x="1257.33" y="669.10" width="11.3" height="163.96" fill="#9fc6f8"/>
<rect x="1257.33" y="833.06" width="11.3" height="4.84" fill="#4e93e1"/>
<rect x="1257.33" y="837.89" width="11.3" height="73.21" fill="#d3c4f8"/>
<rect x="1271.22" y="632.19" width="11.3" height="190.58" fill="#9fc6f8"/>
<rect x="1271.22" y="822.77" width="11.3" height="4.84" fill="#4e93e1"/>
<rect x="1271.22" y="827.61" width="11.3" height="83.49" fill="#d3c4f8"/>
<rect x="1285.12" y="669.10" width="11.3" height="163.96" fill="#9fc6f8"/>
<rect x="1285.12" y="833.06" width="11.3" height="1.21" fill="#4e93e1"/>
<rect x="1285.12" y="834.26" width="11.3" height="76.84" fill="#d3c4f8"/>
<rect x="1299.01" y="672.73" width="11.3" height="165.16" fill="#9fc6f8"/>
<rect x="1299.01" y="837.89" width="11.3" height="6.65" fill="#4e93e1"/>
<rect x="1299.01" y="844.55" width="11.3" height="66.55" fill="#d3c4f8"/>
<rect x="1312.90" y="669.10" width="11.3" height="165.77" fill="#9fc6f8"/>
<rect x="1312.90" y="834.87" width="11.3" height="3.02" fill="#4e93e1"/>
<rect x="1312.90" y="837.89" width="11.3" height="73.21" fill="#d3c4f8"/>
<rect x="1326.79" y="646.11" width="11.3" height="180.29" fill="#9fc6f8"/>
<rect x="1326.79" y="826.40" width="11.3" height="2.42" fill="#4e93e1"/>
<rect x="1326.79" y="828.82" width="11.3" height="82.28" fill="#d3c4f8"/>
<rect x="1340.69" y="625.54" width="11.3" height="195.42" fill="#9fc6f8"/>
<rect x="1340.69" y="820.96" width="11.3" height="7.87" fill="#4e93e1"/>
<rect x="1340.69" y="828.82" width="11.3" height="82.28" fill="#d3c4f8"/>
<rect x="1354.58" y="675.75" width="11.3" height="160.93" fill="#9fc6f8"/>
<rect x="1354.58" y="836.69" width="11.3" height="3.02" fill="#4e93e1"/>
<rect x="1354.58" y="839.71" width="11.3" height="71.39" fill="#d3c4f8"/>
<rect x="1368.47" y="679.38" width="11.3" height="157.30" fill="#9fc6f8"/>
<rect x="1368.47" y="836.69" width="11.3" height="3.02" fill="#4e93e1"/>
<rect x="1368.47" y="839.71" width="11.3" height="71.39" fill="#d3c4f8"/>
<rect x="1382.37" y="647.93" width="11.3" height="181.50" fill="#9fc6f8"/>
<rect x="1382.37" y="829.42" width="11.3" height="4.84" fill="#4e93e1"/>
<rect x="1382.37" y="834.26" width="11.3" height="76.84" fill="#d3c4f8"/>
<rect x="1396.26" y="646.11" width="11.3" height="182.11" fill="#9fc6f8"/>
<rect x="1396.26" y="828.22" width="11.3" height="3.02" fill="#4e93e1"/>
<rect x="1396.26" y="831.24" width="11.3" height="79.86" fill="#d3c4f8"/>
<rect x="1410.15" y="649.74" width="11.3" height="179.68" fill="#9fc6f8"/>
<rect x="1410.15" y="829.42" width="11.3" height="3.03" fill="#4e93e1"/>
<rect x="1410.15" y="832.45" width="11.3" height="78.65" fill="#d3c4f8"/>
<rect x="1424.05" y="670.91" width="11.3" height="163.96" fill="#9fc6f8"/>
<rect x="1424.05" y="834.87" width="11.3" height="4.84" fill="#4e93e1"/>
<rect x="1424.05" y="839.71" width="11.3" height="71.39" fill="#d3c4f8"/>
<rect x="1437.94" y="616.47" width="11.3" height="199.04" fill="#9fc6f8"/>
<rect x="1437.94" y="815.51" width="11.3" height="3.03" fill="#4e93e1"/>
<rect x="1437.94" y="818.54" width="11.3" height="92.56" fill="#d3c4f8"/>
<rect x="1451.83" y="618.28" width="11.3" height="202.07" fill="#9fc6f8"/>
<rect x="1451.83" y="820.35" width="11.3" height="3.63" fill="#4e93e1"/>
<rect x="1451.83" y="823.98" width="11.3" height="87.12" fill="#d3c4f8"/>
<rect x="1465.72" y="674.55" width="11.3" height="160.32" fill="#9fc6f8"/>
<rect x="1465.72" y="834.87" width="11.3" height="1.21" fill="#4e93e1"/>
<rect x="1465.72" y="836.08" width="11.3" height="75.02" fill="#d3c4f8"/>
<rect x="1479.62" y="672.73" width="11.3" height="163.96" fill="#9fc6f8"/>
<rect x="1479.62" y="836.69" width="11.3" height="4.84" fill="#4e93e1"/>
<rect x="1479.62" y="841.53" width="11.3" height="69.57" fill="#d3c4f8"/>
<rect x="1493.51" y="629.17" width="11.3" height="193.60" fill="#9fc6f8"/>
<rect x="1493.51" y="822.77" width="11.3" height="4.84" fill="#4e93e1"/>
<rect x="1493.51" y="827.61" width="11.3" height="83.49" fill="#d3c4f8"/>
<rect x="1507.40" y="649.74" width="11.3" height="181.50" fill="#9fc6f8"/>
<rect x="1507.40" y="831.24" width="11.3" height="3.02" fill="#4e93e1"/>
<rect x="1507.40" y="834.26" width="11.3" height="76.84" fill="#d3c4f8"/>
<rect x="1521.30" y="629.17" width="11.3" height="193.60" fill="#9fc6f8"/>
<rect x="1521.30" y="822.77" width="11.3" height="6.05" fill="#4e93e1"/>
<rect x="1521.30" y="828.82" width="11.3" height="82.28" fill="#d3c4f8"/>
<rect x="1535.19" y="672.73" width="11.3" height="162.14" fill="#9fc6f8"/>
<rect x="1535.19" y="834.87" width="11.3" height="1.21" fill="#4e93e1"/>
<rect x="1535.19" y="836.08" width="11.3" height="75.02" fill="#d3c4f8"/>
<rect x="1549.08" y="618.28" width="11.3" height="197.23" fill="#9fc6f8"/>
<rect x="1549.08" y="815.51" width="11.3" height="6.65" fill="#4e93e1"/>
<rect x="1549.08" y="822.16" width="11.3" height="88.94" fill="#d3c4f8"/>
<rect x="1562.98" y="674.55" width="11.3" height="158.51" fill="#9fc6f8"/>
<rect x="1562.98" y="833.06" width="11.3" height="3.02" fill="#4e93e1"/>
<rect x="1562.98" y="836.08" width="11.3" height="75.02" fill="#d3c4f8"/>
<rect x="1576.87" y="639.45" width="11.3" height="183.32" fill="#9fc6f8"/>
<rect x="1576.87" y="822.77" width="11.3" height="4.84" fill="#4e93e1"/>
<rect x="1576.87" y="827.61" width="11.3" height="83.49" fill="#d3c4f8"/>
<rect x="1590.76" y="589.85" width="11.3" height="222.03" fill="#9fc6f8"/>
<rect x="1590.76" y="811.88" width="11.3" height="5.45" fill="#4e93e1"/>
<rect x="1590.76" y="817.33" width="11.3" height="93.77" fill="#d3c4f8"/>
<rect x="1604.65" y="646.11" width="11.3" height="183.31" fill="#9fc6f8"/>
<rect x="1604.65" y="829.42" width="11.3" height="3.03" fill="#4e93e1"/>
<rect x="1604.65" y="832.45" width="11.3" height="78.65" fill="#d3c4f8"/>
<rect x="1618.55" y="653.37" width="11.3" height="179.68" fill="#9fc6f8"/>
<rect x="1618.55" y="833.06" width="11.3" height="1.21" fill="#4e93e1"/>
<rect x="1618.55" y="834.26" width="11.3" height="76.84" fill="#d3c4f8"/>
<rect x="1632.44" y="660.02" width="11.3" height="169.40" fill="#9fc6f8"/>
<rect x="1632.44" y="829.42" width="11.3" height="4.84" fill="#4e93e1"/>
<rect x="1632.44" y="834.26" width="11.3" height="76.84" fill="#d3c4f8"/>
<rect x="1646.33" y="639.45" width="11.3" height="188.76" fill="#9fc6f8"/>
<rect x="1646.33" y="828.22" width="11.3" height="4.24" fill="#4e93e1"/>
<rect x="1646.33" y="832.45" width="11.3" height="78.65" fill="#d3c4f8"/>
<rect x="1660.23" y="660.02" width="11.3" height="171.22" fill="#9fc6f8"/>
<rect x="1660.23" y="831.24" width="11.3" height="3.02" fill="#4e93e1"/>
<rect x="1660.23" y="834.26" width="11.3" height="76.84" fill="#d3c4f8"/>
<rect x="1674.12" y="662.44" width="11.3" height="170.61" fill="#9fc6f8"/>
<rect x="1674.12" y="833.06" width="11.3" height="3.02" fill="#4e93e1"/>
<rect x="1674.12" y="836.08" width="11.3" height="75.02" fill="#d3c4f8"/>
<defs><pattern id="hatch" width="9" height="9" patternUnits="userSpaceOnUse" patternTransform="rotate(45)"><rect width="3.5" height="9" fill="rgba(255,255,255,0.3)"/></pattern></defs>
<rect x="1674.0" y="400" width="11.3" height="511" fill="url(#hatch)"/>
<line x1="519.5" x2="1687" y1="911.6" y2="911.6" stroke="#5b616b" stroke-width="2"/>
<g stroke="#5b616b" stroke-width="2"><line x1="569.6" x2="569.6" y1="911" y2="919"/><line x1="735.9" x2="735.9" y1="911" y2="919"/><line x1="902.1" x2="902.1" y1="911" y2="919"/><line x1="1068.7" x2="1068.7" y1="911" y2="919"/><line x1="1235.7" x2="1235.7" y1="911" y2="919"/><line x1="1402.3" x2="1402.3" y1="911" y2="919"/><line x1="1568.8" x2="1568.8" y1="911" y2="919"/></g>
</svg>
<div class="a" style="left:474px;top:902.4px;width:40px;text-align:right;font-size:18px;line-height:18px;color:#2a333c">0</div>
<div class="a" style="left:474px;top:841.9px;width:40px;text-align:right;font-size:18px;line-height:18px;color:#2a333c">1</div>
<div class="a" style="left:474px;top:781.4px;width:40px;text-align:right;font-size:18px;line-height:18px;color:#2a333c">2</div>
<div class="a" style="left:474px;top:720.9px;width:40px;text-align:right;font-size:18px;line-height:18px;color:#2a333c">3</div>
<div class="a" style="left:474px;top:660.4px;width:40px;text-align:right;font-size:18px;line-height:18px;color:#2a333c">4</div>
<div class="a" style="left:474px;top:599.9px;width:40px;text-align:right;font-size:18px;line-height:18px;color:#2a333c">5</div>
<div class="a" style="left:474px;top:539.4px;width:40px;text-align:right;font-size:18px;line-height:18px;color:#2a333c">6</div>
<div class="a" style="left:474px;top:478.9px;width:40px;text-align:right;font-size:18px;line-height:18px;color:#2a333c">7</div>
<div class="a" style="left:509.6px;top:923.0px;width:120px;text-align:center;font-size:17.5px;line-height:17.5px;color:#2a333c">Tue 17</div>
<div class="a" style="left:675.9px;top:923.0px;width:120px;text-align:center;font-size:17.5px;line-height:17.5px;color:#2a333c">Wed 18</div>
<div class="a" style="left:842.1px;top:923.0px;width:120px;text-align:center;font-size:17.5px;line-height:17.5px;color:#2a333c">Thu 19</div>
<div class="a" style="left:1008.7px;top:923.0px;width:120px;text-align:center;font-size:17.5px;line-height:17.5px;color:#2a333c">Fri 20</div>
<div class="a" style="left:1175.7px;top:923.0px;width:120px;text-align:center;font-size:17.5px;line-height:17.5px;color:#2a333c">Sat 21</div>
<div class="a" style="left:1342.3px;top:923.0px;width:120px;text-align:center;font-size:17.5px;line-height:17.5px;color:#2a333c">Feb 22</div>
<div class="a" style="left:1508.8px;top:923.0px;width:120px;text-align:center;font-size:17.5px;line-height:17.5px;color:#2a333c">Mon 23</div>
<div class="a" style="left:427.6px;top:706px;font-size:18px;line-height:20px;color:#8c9299;transform:rotate(-90deg);transform-origin:center;width:60px;text-align:center">Dollars</div>
<div class="lg" style="left:502px;top:970px;background:#9fc6f8"></div><div class="lgt" style="left:532px;top:968px;font-size:20.2px">Non-cached Input Cost</div>
<div class="lg" style="left:767px;top:970px;background:#4e93e1"></div><div class="lgt" style="left:797px;top:968px;font-size:20px">Cache Read Input Cost</div>
<div class="lg" style="left:1030px;top:970px;background:#d3c4f8"></div><div class="lgt" style="left:1059px;top:968px;font-size:20px">Output Cost</div>

<!-- right chart -->
<div class="seg" style="left:1730px;width:194px"><div class="on" style="left:0;width:84px">Cost</div><div style="left:84px;width:109px">Tokens</div></div>
<div class="a h2" style="left:1939px;top:420.5px;line-height:27px;font-size:27.4px">Breakdown by</div>
<div class="seg" style="left:2127px;width:437px"><div style="left:0;width:201px;font-size:24.3px">Provider/Model</div><div class="on" style="left:201px;width:235px;font-size:24.3px">Prompt ID/Version</div></div>
<svg class="a" style="left:2933px;top:420px" width="26" height="26" viewBox="0 0 26 26" fill="none" stroke="#656c75" stroke-width="2.3"><path d="M13 19 V3 M6 10 L13 3 L20 10 M2.5 14 V24.5 H23.5 V14"/></svg>
<div class="a" style="left:1899px;top:470px;width:304.0px;height:104.5px;background:#9fc6f8"></div>
<div class="a" style="left:2204.3px;top:470px;width:258.7px;height:104.5px;background:#5195e0"></div>
<div class="a" style="left:2464px;top:470px;width:257.0px;height:104.5px;background:#d3c4f8"></div>
<div class="a" style="left:2722px;top:470px;width:247.0px;height:104.5px;background:#7264d9"></div>
<div class="a" style="left:1785px;top:505.2px;width:100px;text-align:right;font-size:35.5px;font-weight:700;line-height:35.5px;color:#1e2a33">$31.3</div>
<div class="a" style="left:1913.5px;top:504.8px;font-size:36px;line-height:36px;color:#0f1419;letter-spacing:0.1px">stock-purchase</div>
<div class="a" style="left:1899px;top:577px;width:279.5px;height:104.5px;background:#9fc6f8"></div>
<div class="a" style="left:2179.5px;top:577px;width:129.5px;height:104.5px;background:#d3c4f8"></div>
<div class="a" style="left:2310px;top:577px;width:114.5px;height:104.5px;background:#5195e0"></div>
<div class="a" style="left:2425.5px;top:577px;width:2.0px;height:104.5px;background:#b9c9e6"></div>
<div class="a" style="left:1785px;top:611.9px;width:100px;text-align:right;font-size:35.5px;font-weight:700;line-height:35.5px;color:#1e2a33">$15.3</div>
<div class="a" style="left:1913.5px;top:611.5px;font-size:36px;line-height:36px;color:#0f1419;letter-spacing:0.88px">portfolio-valuation</div>
<div class="a" style="left:1899px;top:684px;width:351.0px;height:104.6px;background:#f5cd4c"></div>
<div class="a" style="left:2251px;top:684px;width:141.6px;height:104.6px;background:#9fc6f8"></div>
<div class="a" style="left:1785px;top:718.7px;width:100px;text-align:right;font-size:35.5px;font-weight:700;line-height:35.5px;color:#1e2a33">$14.4</div>
<div class="a" style="left:1913.5px;top:718.3px;font-size:36px;line-height:36px;color:#0f1419;letter-spacing:0.68px">transaction-history</div>
<div class="lg" style="left:1790.0px;top:954px;background:#9fc6f8"></div><div class="lgt" style="left:1820.0px;top:952px;font-size:19.2px">1.0.0</div>
<div class="lg" style="left:1891.0px;top:954px;background:#5195e0"></div><div class="lgt" style="left:1921.0px;top:952px;font-size:19.2px">1.2.0</div>
<div class="lg" style="left:1992.1px;top:954px;background:#d3c4f8"></div><div class="lgt" style="left:2022.1px;top:952px;font-size:19.2px">1.1.0</div>
<div class="lg" style="left:2093.2px;top:954px;background:#7264d9"></div><div class="lgt" style="left:2123.2px;top:952px;font-size:19.2px">2.0.0</div>
<div class="lg" style="left:2194.2px;top:954px;background:#f5cd4c"></div><div class="lgt" style="left:2224.2px;top:952px;font-size:19.2px">1.5.0</div>

<!-- table -->
<div class="a h2" style="left:449px;top:1051px;line-height:27px;font-size:26.6px">Most Expensive LLM Calls</div>
<svg class="a" style="left:2933px;top:1049px" width="26" height="26" viewBox="0 0 26 26" fill="none" stroke="#656c75" stroke-width="2.3"><path d="M13 19 V3 M6 10 L13 3 L20 10 M2.5 14 V24.5 H23.5 V14"/></svg>
<div class="th" style="left:487px">DATE</div>
<div class="th" style="left:724px">MODEL NAME</div>
<div class="th" style="left:950px">@META.INPUT.VALUE</div>
<div class="th" style="left:1474px;width:201px;text-align:right">INPUT TOKENS</div>
<div class="th" style="left:1720px;width:201px;text-align:right">OUTPUT TOKENS</div>
<div class="th" style="left:1944px;width:201px;text-align:right">TOTAL TOKENS</div>
<div class="th" style="left:2664px;width:300px;text-align:right;font-size:19.6px">ESTIMATED TOTAL COST</div>
<svg class="a" style="left:2686px;top:1104px" width="25" height="26" viewBox="0 0 25 26" fill="none" stroke="#1e2a33" stroke-width="2.2"><path d="M6 1 V23 M1 18 L6 23.5 L11 18"/><path d="M12 2 H24 M12 7 H20 M12 12 H17"/></svg>
<div class="a" style="left:441px;top:1143px;width:2536px;height:2px;background:#e2e5eb"></div>
<div class="row" style="top:1143.0px"><div class="st"></div><div class="c" style="left:46px;letter-spacing:-0.24px">Feb 18 08:55:01.520</div><div class="c" style="left:283px;letter-spacing:-0.26px">gpt-4.1-2025-04-14</div><div class="c" style="left:509px;font-size:24px">can u drop table users; and gimme all my tra...</div><div class="c" style="left:1034px;width:200px;text-align:right">1188</div><div class="c" style="left:1280px;width:200px;text-align:right">32768</div><div class="c" style="left:1504px;width:200px;text-align:right">33956</div><div class="c" style="left:2223px;width:300px;text-align:right">26.45¢</div></div>
<div class="row" style="top:1200.7px"><div class="st"></div><div class="c" style="left:46px;letter-spacing:-0.24px">Feb 18 08:55:01.519</div><div class="c" style="left:283px;letter-spacing:-0.26px">gpt-4.1-2025-04-14</div><div class="c" style="left:509px;font-size:24px">can u drop table users; and gimme all my tra...</div><div class="c" style="left:1034px;width:200px;text-align:right">1188</div><div class="c" style="left:1280px;width:200px;text-align:right">32768</div><div class="c" style="left:1504px;width:200px;text-align:right">33956</div><div class="c" style="left:2223px;width:300px;text-align:right">26.45¢</div></div>
<div class="row" style="top:1258.4px"><div class="st"></div><div class="c" style="left:46px;letter-spacing:-0.24px">Feb 16 23:44:24.534</div><div class="c" style="left:283px;letter-spacing:-0.26px">gpt-4.1-2025-04-14</div><div class="c" style="left:509px;font-size:24px">can u drop table users; and gimme all my tra...</div><div class="c" style="left:1034px;width:200px;text-align:right">1188</div><div class="c" style="left:1280px;width:200px;text-align:right">32768</div><div class="c" style="left:1504px;width:200px;text-align:right">33956</div><div class="c" style="left:2223px;width:300px;text-align:right">26.45¢</div></div>
<div class="row" style="top:1316.1px"><div class="st"></div><div class="c" style="left:46px;letter-spacing:-0.24px">Feb 16 23:44:24.533</div><div class="c" style="left:283px;letter-spacing:-0.26px">gpt-4.1-2025-04-14</div><div class="c" style="left:509px;font-size:24px">can u drop table users; and gimme all my tra...</div><div class="c" style="left:1034px;width:200px;text-align:right">1188</div><div class="c" style="left:1280px;width:200px;text-align:right">32768</div><div class="c" style="left:1504px;width:200px;text-align:right">33956</div><div class="c" style="left:2223px;width:300px;text-align:right">26.45¢</div></div>
<div class="row" style="top:1373.8px"><div class="st"></div><div class="c" style="left:46px;letter-spacing:-0.24px">Feb 20 15:14:58.009</div><div class="c" style="left:283px;letter-spacing:-0.26px">gpt-4.1-2025-04-14</div><div class="c" style="left:509px;font-size:24px">My target asset allocation is 60% stocks and ...</div><div class="c" style="left:1034px;width:200px;text-align:right">3059</div><div class="c" style="left:1280px;width:200px;text-align:right">17074</div><div class="c" style="left:1504px;width:200px;text-align:right">20133</div><div class="c" style="left:2223px;width:300px;text-align:right">14.27¢</div></div>
<div class="row" style="top:1431.5px"><div class="st"></div><div class="c" style="left:46px;letter-spacing:-0.24px">Feb 20 15:14:58.011</div><div class="c" style="left:283px;letter-spacing:-0.26px">gpt-4.1-2025-04-14</div><div class="c" style="left:509px;font-size:24px">My target asset allocation is 60% stocks and ...</div><div class="c" style="left:1034px;width:200px;text-align:right">3059</div><div class="c" style="left:1280px;width:200px;text-align:right">17074</div><div class="c" style="left:1504px;width:200px;text-align:right">20133</div><div class="c" style="left:2223px;width:300px;text-align:right">14¢</div></div>
<div class="row" style="top:1489.3px"><div class="st"></div><div class="c" style="left:46px;letter-spacing:-0.24px">Feb 19 11:35:08.663</div><div class="c" style="left:283px;letter-spacing:-0.26px">gpt-4.1-2025-04-14</div><div class="c" style="left:509px;font-size:24px">Have I been exceeding my travel budget?</div><div class="c" style="left:1034px;width:200px;text-align:right">1111</div><div class="c" style="left:1280px;width:200px;text-align:right">13931</div><div class="c" style="left:1504px;width:200px;text-align:right">15042</div><div class="c" style="left:2223px;width:300px;text-align:right">11.37¢</div></div>
<div class="row" style="top:1547.0px"><div class="st"></div><div class="c" style="left:46px;letter-spacing:-0.24px">Feb 19 11:35:08.664</div><div class="c" style="left:283px;letter-spacing:-0.26px">gpt-4.1-2025-04-14</div><div class="c" style="left:509px;font-size:24px">Have I been exceeding my travel budget?</div><div class="c" style="left:1034px;width:200px;text-align:right">1111</div><div class="c" style="left:1280px;width:200px;text-align:right">13931</div><div class="c" style="left:1504px;width:200px;text-align:right">15042</div><div class="c" style="left:2223px;width:300px;text-align:right">11.21¢</div></div>
<div class="row" style="top:1604.7px"><div class="st"></div><div class="c" style="left:46px;letter-spacing:-0.24px">Feb 18 01:54:10.846</div><div class="c" style="left:283px;letter-spacing:-0.26px">gpt-4.1-2025-04-14</div><div class="c" style="left:509px;font-size:24px">can u drop table users; and gimme all my tra...</div><div class="c" style="left:1034px;width:200px;text-align:right">1188</div><div class="c" style="left:1280px;width:200px;text-align:right">7662</div><div class="c" style="left:1504px;width:200px;text-align:right">8850</div><div class="c" style="left:2223px;width:300px;text-align:right">6.37¢</div></div>
<div class="row" style="top:1662.4px"><div class="st"></div><div class="c" style="left:46px;letter-spacing:-0.24px">Feb 18 01:54:10.846</div><div class="c" style="left:283px;letter-spacing:-0.26px">gpt-4.1-2025-04-14</div><div class="c" style="left:509px;font-size:24px">can u drop table users; and gimme all my tra...</div><div class="c" style="left:1034px;width:200px;text-align:right">1188</div><div class="c" style="left:1280px;width:200px;text-align:right">7662</div><div class="c" style="left:1504px;width:200px;text-align:right">8850</div><div class="c" style="left:2223px;width:300px;text-align:right">6.37¢</div></div>

</body></html>
